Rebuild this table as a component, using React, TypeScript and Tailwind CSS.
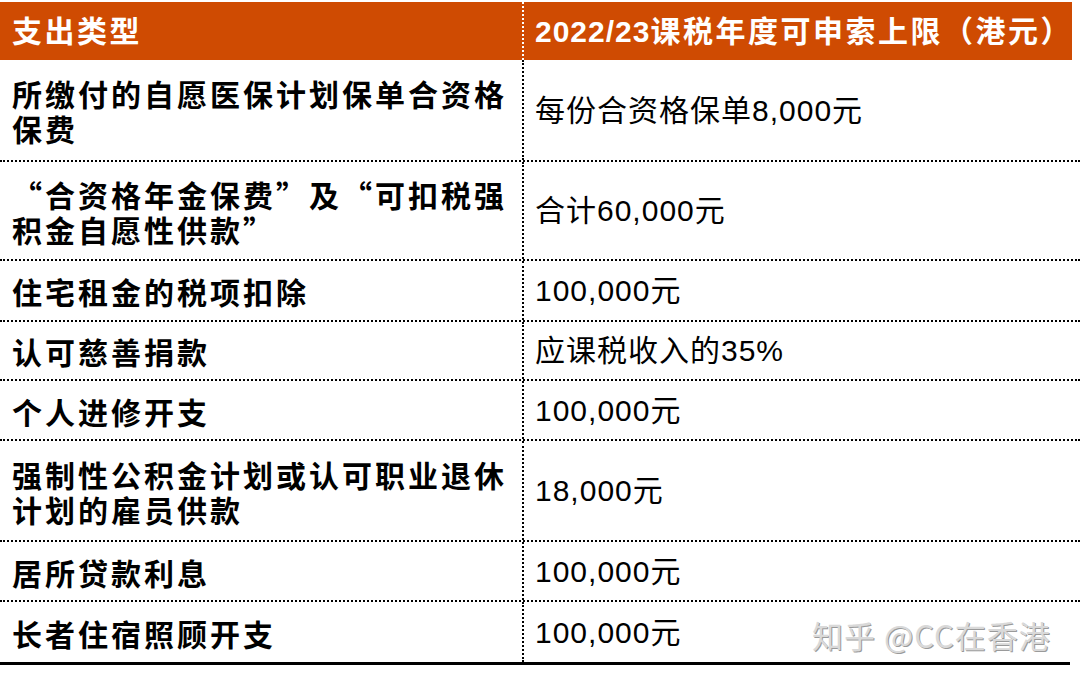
const rows: { label: string[]; limit: string; h: string }[] = [
  { label: ["所缴付的自愿医保计划保单合资格", "保费"], limit: "每份合资格保单8,000元", h: "h-[102px]" },
  { label: ["“合资格年金保费”及“可扣税强", "积金自愿性供款”"], limit: "合计60,000元", h: "h-[99px]" },
  { label: ["住宅租金的税项扣除"], limit: "100,000元", h: "h-[61px]" },
  { label: ["认可慈善捐款"], limit: "应课税收入的35%", h: "h-[59px]" },
  { label: ["个人进修开支"], limit: "100,000元", h: "h-[60px]" },
  { label: ["强制性公积金计划或认可职业退休", "计划的雇员供款"], limit: "18,000元", h: "h-[101px]" },
  { label: ["居所贷款利息"], limit: "100,000元", h: "h-[60px]" },
  { label: ["长者住宿照顾开支"], limit: "100,000元", h: "h-[60px]" },
];

export default function App() {
  return (
    <div className="w-[1080px] h-[673px] bg-white relative overflow-hidden pt-[2px] font-['Liberation_Sans','Noto_Sans_CJK_SC',sans-serif] text-black">
      <div className="w-[1072px] h-[58px] bg-[#cf4b02] grid grid-cols-[522px_1fr] text-white font-bold text-[30px] tracking-[2.5px]">
        <div className="flex items-center pl-[12px]">支出类型</div>
        <div className="flex items-center pl-[11px] border-l-2 border-dotted border-white">
          <span className="font-['Liberation_Sans_Narrow','Liberation_Sans',sans-serif] tracking-[1px]">2022/23</span>
          <span>课税年度可申索上限（港元）</span>
        </div>
      </div>
      <div className="w-[1080px]">
        {rows.map((r, i) => (
          <div
            key={i}
            className={`grid grid-cols-[522px_1fr] ${r.h} ${
              i === rows.length - 1 ? "" : "border-b-2 border-dotted border-black"
            }`}
          >
            <div className="flex items-center pt-[2px] pl-[12px] font-bold text-[30px] leading-[35px] tracking-[3px] font-['Noto_Sans_CJK_SC',sans-serif]">
              <p className="whitespace-nowrap">
                {r.label.map((l, j) => (
                  <span key={j}>
                    {j > 0 && <br />}
                    {l}
                  </span>
                ))}
              </p>
            </div>
            <div className="flex items-center pl-[11px] border-l-2 border-dotted border-black text-[30px] tracking-[1px]">
              {r.limit}
            </div>
          </div>
        ))}
      </div>
      <div className="w-[1070px] h-[3px] bg-black" />
      <div className="absolute left-[812px] top-[612px] text-[31px] text-[#d9d9d9] tracking-[1px] [text-shadow:1px_1px_0_#9a9a9a] font-['Noto_Sans_CJK_SC',sans-serif]">
        知乎 @CC在香港
      </div>
    </div>
  );
}
